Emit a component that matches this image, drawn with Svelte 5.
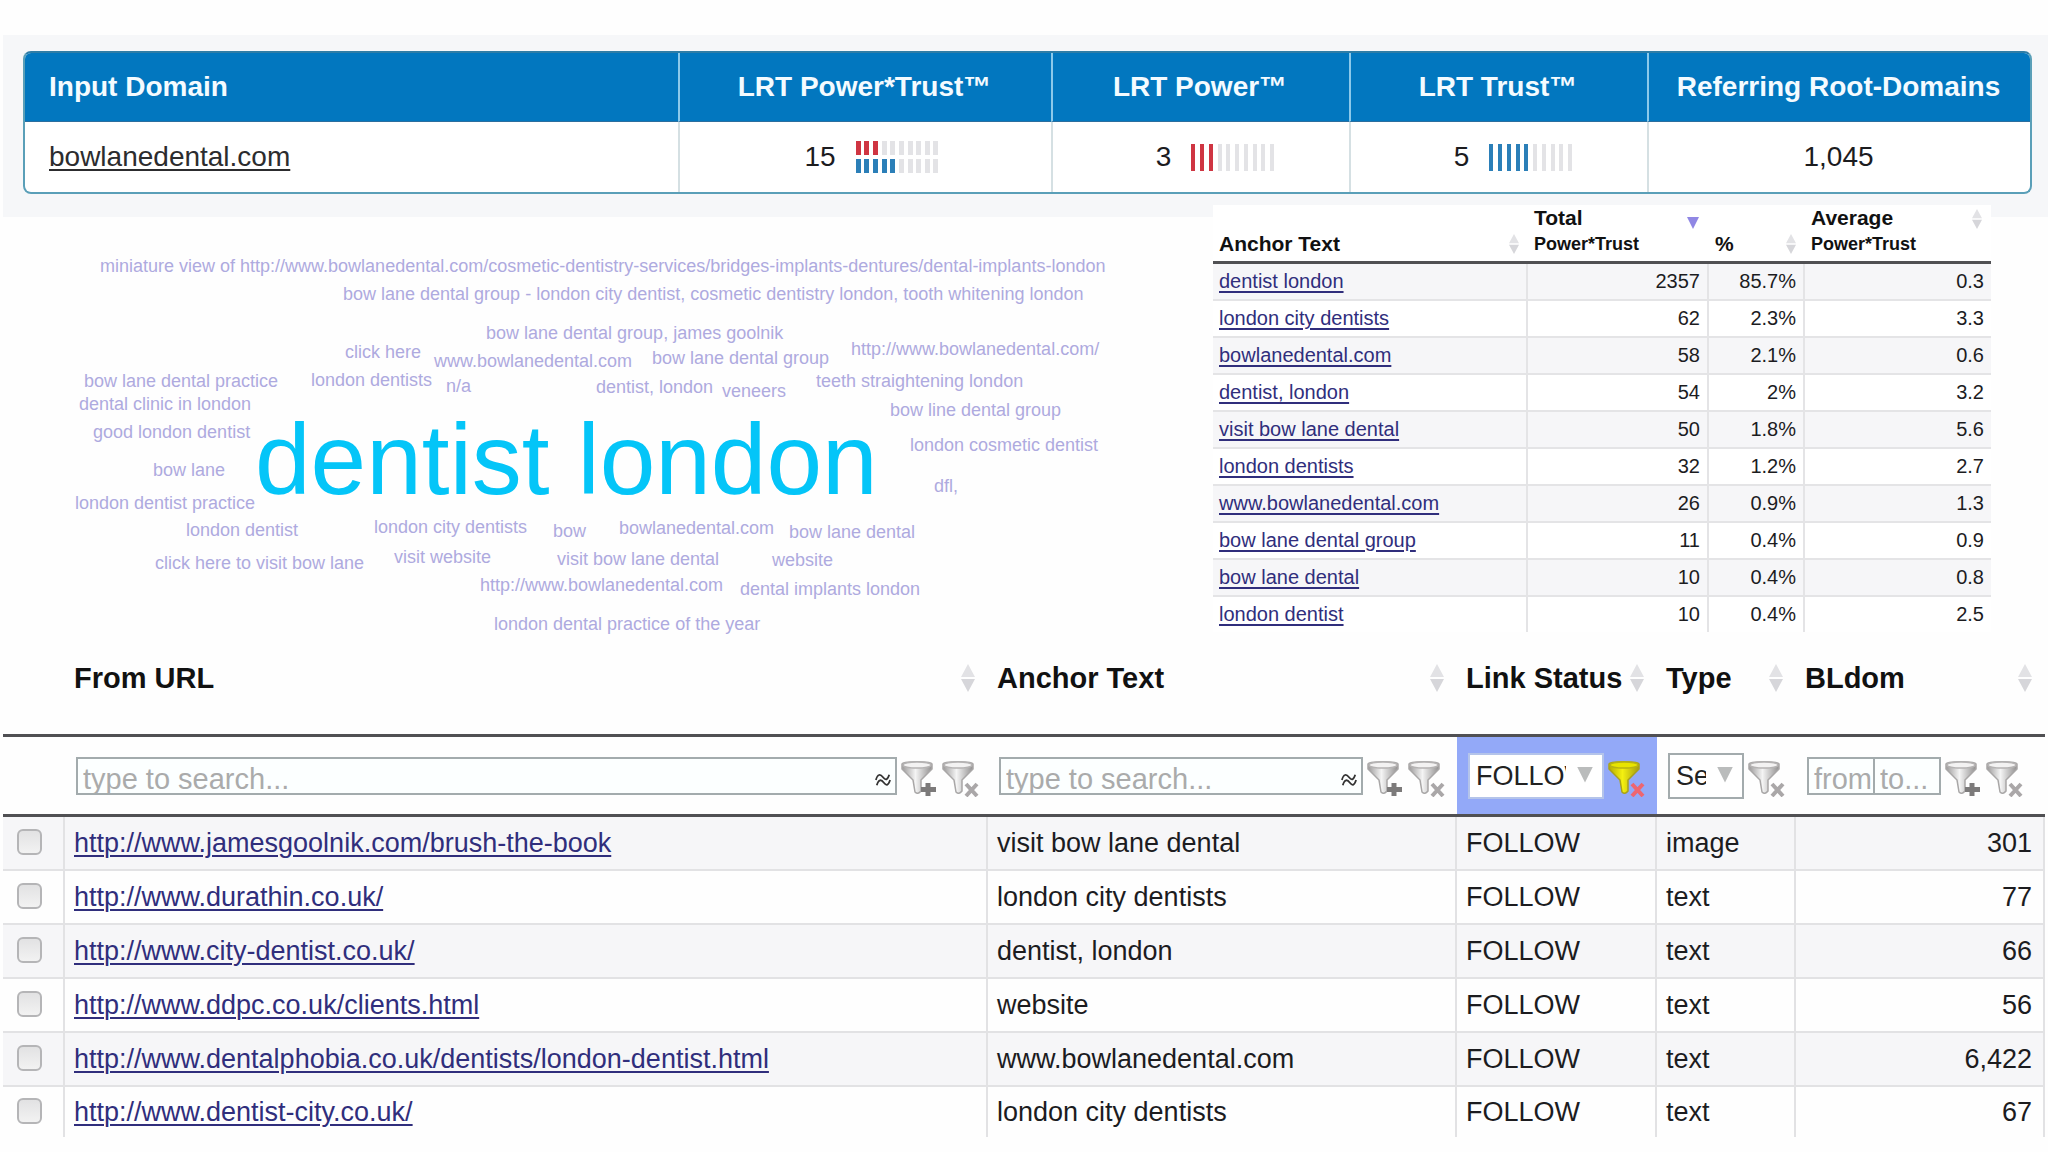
<script>
  const phrases = [
    ['miniature view of http://www.bowlanedental.com/cosmetic-dentistry-services/bridges-implants-dentures/dental-implants-london', 100, 66],
    ['bow lane dental group - london city dentist, cosmetic dentistry london, tooth whitening london', 343, 94],
    ['bow lane dental group, james goolnik', 486, 133],
    ['click here', 345, 152],
    ['www.bowlanedental.com', 434, 161],
    ['bow lane dental group', 652, 158],
    ['http://www.bowlanedental.com/', 851, 149],
    ['bow lane dental practice', 84, 181],
    ['london dentists', 311, 180],
    ['n/a', 446, 186],
    ['dentist, london', 596, 187],
    ['veneers', 722, 191],
    ['teeth straightening london', 816, 181],
    ['dental clinic in london', 79, 204],
    ['bow line dental group', 890, 210],
    ['good london dentist', 93, 232],
    ['london cosmetic dentist', 910, 245],
    ['bow lane', 153, 270],
    ['dfl,', 934, 286],
    ['london dentist practice', 75, 303],
    ['london dentist', 186, 330],
    ['london city dentists', 374, 327],
    ['bow', 553, 331],
    ['bowlanedental.com', 619, 328],
    ['bow lane dental', 789, 332],
    ['click here to visit bow lane', 155, 363],
    ['visit website', 394, 357],
    ['visit bow lane dental', 557, 359],
    ['website', 772, 360],
    ['http://www.bowlanedental.com', 480, 385],
    ['dental implants london', 740, 389],
    ['london dental practice of the year', 494, 424]
  ];

  const anchors = [
    ['dentist london', '2357', '85.7%', '0.3'],
    ['london city dentists', '62', '2.3%', '3.3'],
    ['bowlanedental.com', '58', '2.1%', '0.6'],
    ['dentist, london', '54', '2%', '3.2'],
    ['visit bow lane dental', '50', '1.8%', '5.6'],
    ['london dentists', '32', '1.2%', '2.7'],
    ['www.bowlanedental.com', '26', '0.9%', '1.3'],
    ['bow lane dental group', '11', '0.4%', '0.9'],
    ['bow lane dental', '10', '0.4%', '0.8'],
    ['london dentist', '10', '0.4%', '2.5']
  ];

  const links = [
    ['http://www.jamesgoolnik.com/brush-the-book', 'visit bow lane dental', 'image', '301'],
    ['http://www.durathin.co.uk/', 'london city dentists', 'text', '77'],
    ['http://www.city-dentist.co.uk/', 'dentist, london', 'text', '66'],
    ['http://www.ddpc.co.uk/clients.html', 'website', 'text', '56'],
    ['http://www.dentalphobia.co.uk/dentists/london-dentist.html', 'www.bowlanedental.com', 'text', '6,422'],
    ['http://www.dentist-city.co.uk/', 'london city dentists', 'text', '67']
  ];
</script>

{#snippet bars(filled, tone, short)}
  <span class="bars {tone}" class:short>
    {#each Array(10) as _, i}<i class:on={i < filled}></i>{/each}
  </span>
{/snippet}

{#snippet sorter(label)}
  <button class="sorter" aria-label="Sort by {label}">
    <svg viewBox="0 0 16 30" width="100%" height="100%" preserveAspectRatio="none">
      <path d="M8 0 16 14H0z" fill="#e2e2e5" />
      <path d="M8 30 16 16H0z" fill="#d6d6da" />
    </svg>
  </button>
{/snippet}

{#snippet funnel(kind, label)}
  <button class="funnel" aria-label={label}>
    <svg viewBox="0 0 37 37" width="37" height="37">
      <defs>
        <linearGradient id="cone-{kind}">
          {#if kind === 'active'}
            <stop offset="0" stop-color="#b5ac00" />
            <stop offset=".45" stop-color="#f4f010" />
            <stop offset="1" stop-color="#a59d10" />
          {:else}
            <stop offset="0" stop-color="#9b9999" />
            <stop offset=".45" stop-color="#f4f4f4" />
            <stop offset="1" stop-color="#918f8f" />
          {/if}
        </linearGradient>
      </defs>
      <path
        d="M1 4C1 1 31 1 31 4V9L20 20V31Q17 35 14 32L12 20 1 9Z"
        fill="url(#cone-{kind})"
        stroke={kind === 'active' ? '#a8a11c' : '#a9a7a7'}
        stroke-width="1.5"
      />
      <ellipse
        cx="16" cy="5" rx="14" ry="3"
        fill={kind === 'active' ? '#e8e400' : '#f3f2f2'}
        stroke={kind === 'active' ? '#b8b313' : '#b5b3b3'}
        stroke-width="1.5"
      />
      {#if kind === 'add'}
        <path d="M27 23V36M20 29.500H35" stroke="#7c7a7a" stroke-width="5" />
      {:else}
        <path
          d="M24 24 35 36M35 24 24 36"
          stroke={kind === 'active' ? '#ee6670' : '#aaa7a8'}
          stroke-width="4"
        />
      {/if}
    </svg>
  </button>
{/snippet}

{#snippet search(label)}
  <div class="filter">
    <div class="field">
      <input type="text" placeholder="type to search..." aria-label="Search {label}" />
      <button class="fuzzy" aria-label="Match mode for {label}">
        <svg viewBox="0 0 18 16" width="16" height="16" fill="none" stroke="#333" stroke-width="2">
          <path d="M1 8C3 1 6 1 9 5S14 8 16 2M2 14C4 7 7 7 10 11S15 14 17 8" />
        </svg>
      </button>
    </div>
    {@render funnel('add', `Add filter on ${label}`)}
    {@render funnel('clear', `Clear filter on ${label}`)}
  </div>
{/snippet}

<main>
  <section class="summary">
    <div class="frame">
      <table>
        <colgroup>
          <col class="s1" /><col class="s2" /><col class="s3" /><col class="s3" /><col class="s5" />
        </colgroup>
        <thead>
          <tr>
            <th class="left">Input Domain</th>
            <th>LRT Power*Trust™</th>
            <th>LRT Power™</th>
            <th>LRT Trust™</th>
            <th>Referring Root-Domains</th>
          </tr>
        </thead>
        <tbody>
          <tr>
            <td class="left"><a href="#domain">bowlanedental.com</a></td>
            <td>
              <div class="score double">
                15
                <div class="stack">{@render bars(3, 'red', true)}{@render bars(5, 'blue', true)}</div>
              </div>
            </td>
            <td><div class="score">3 {@render bars(3, 'red', false)}</div></td>
            <td><div class="score">5 {@render bars(5, 'blue', false)}</div></td>
            <td>1,045</td>
          </tr>
        </tbody>
      </table>
    </div>
  </section>

  <section class="middle">
    <div class="cloud">
      {#each phrases as [text, x, y]}
        <span class="phrase" style:left="{(x - 3) / 12.1}%" style:top="{y}px">{text}</span>
      {/each}
      <span class="phrase lead" style:left="{252 / 12.1}%" style:top="259px">dentist london</span>
    </div>

    <table class="anchors">
      <colgroup><col class="a1" /><col class="a2" /><col class="a3" /><col class="a4" /></colgroup>
      <thead>
        <tr>
          <th><div class="head">Anchor Text {@render sorter('anchor text')}</div></th>
          <th>
            <div class="head top">
              <span>Total<small>Power*Trust</small></span>
              <button class="sorted" aria-label="Sorted by total, descending"></button>
            </div>
          </th>
          <th><div class="head">% {@render sorter('percent')}</div></th>
          <th>
            <div class="head top">
              <span>Average<small>Power*Trust</small></span>
              {@render sorter('average')}
            </div>
          </th>
        </tr>
      </thead>
      <tbody>
        {#each anchors as [text, total, pct, avg]}
          <tr>
            <td><a href="#anchor">{text}</a></td>
            <td>{total}</td>
            <td>{pct}</td>
            <td>{avg}</td>
          </tr>
        {/each}
      </tbody>
    </table>
  </section>

  <table class="links">
    <colgroup>
      <col class="l1" /><col class="l2" /><col class="l3" /><col class="l4" /><col class="l5" /><col class="l6" />
    </colgroup>
    <thead>
      <tr class="titles">
        <td></td>
        <th><div class="head">From URL {@render sorter('URL')}</div></th>
        <th><div class="head">Anchor Text {@render sorter('anchor text')}</div></th>
        <th><div class="head">Link Status {@render sorter('link status')}</div></th>
        <th><div class="head">Type {@render sorter('type')}</div></th>
        <th><div class="head">BLdom {@render sorter('BLdom')}</div></th>
      </tr>
      <tr class="filters">
        <td></td>
        <td>{@render search('URL')}</td>
        <td>{@render search('anchor text')}</td>
        <td class="active">
          <div class="filter">
            <div class="pick wide">
              <select aria-label="Link status"><option>FOLLOW</option><option>NOFOLLOW</option></select>
            </div>
            {@render funnel('active', 'Clear filter on link status')}
          </div>
        </td>
        <td>
          <div class="filter">
            <div class="pick">
              <select aria-label="Type"><option>Select</option><option>text</option><option>image</option></select>
            </div>
            {@render funnel('clear', 'Clear filter on type')}
          </div>
        </td>
        <td>
          <div class="filter">
            <div class="range">
              <input type="text" placeholder="from..." aria-label="BLdom from" />
              <input type="text" placeholder="to..." aria-label="BLdom to" />
            </div>
            {@render funnel('add', 'Add filter on BLdom')}
            {@render funnel('clear', 'Clear filter on BLdom')}
          </div>
        </td>
      </tr>
    </thead>
    <tbody>
      {#each links as [url, anchor, type, count]}
        <tr>
          <td><input type="checkbox" aria-label="Choose {url}" /></td>
          <td><a href={url}>{url}</a></td>
          <td>{anchor}</td>
          <td>FOLLOW</td>
          <td>{type}</td>
          <td class="num">{count}</td>
        </tr>
      {/each}
    </tbody>
  </table>
</main>

<style>
  :global(body) {
    background: #fefefe;
  }
  main {
    padding: 35px 3px 14px;
    font-family: 'Liberation Sans', Arial, Helvetica, sans-serif;
    color: #1c1c1f;
  }
  * {
    box-sizing: border-box;
  }
  table {
    width: 100%;
    border-collapse: separate;
    border-spacing: 0;
    table-layout: fixed;
  }
  th,
  td {
    padding: 0;
    white-space: nowrap;
  }
  button {
    padding: 0;
    border: 0;
    background: none;
    flex: none;
  }
  svg {
    display: block;
  }

  .summary {
    margin-right: -3px;
    padding: 16px 16px 23px 20px;
    background: #f6f7f9;
  }
  .frame {
    border: 2px solid #5a9fb8;
    border-top-color: #2f7da6;
    border-radius: 8px;
    overflow: hidden;
    background: #fff;
  }
  .s1 { width: 653px; }
  .s2 { width: 373px; }
  .s3 { width: 298px; }
  .summary th {
    height: 69px;
    padding-right: 2px;
    background: #0277bf;
    color: #f4fbff;
    font-size: 28px;
    border-bottom: 1px solid #2b6e9e;
    border-left: 2px solid #8cc9ea;
  }
  .summary td {
    height: 70px;
    padding-right: 2px;
    font-size: 28px;
    text-align: center;
    border-left: 2px solid #d5e0e3;
  }
  .summary .left {
    text-align: left;
    padding-left: 24px;
    border-left: 0;
  }
  .summary td a {
    color: #2c2c2e;
  }
  a {
    text-decoration-thickness: 2px;
    text-underline-offset: 3px;
  }
  .score {
    display: flex;
    align-items: center;
    justify-content: center;
    gap: 20px;
    padding-left: 30px;
  }
  .score.double {
    padding-left: 14px;
  }
  .stack {
    display: grid;
    gap: 4px;
  }
  .bars {
    display: flex;
    justify-content: space-between;
    width: 83px;
    height: 27px;
  }
  .bars.short {
    height: 14px;
  }
  .bars i {
    width: 4px;
    background: #e3e3e6;
  }
  .bars.short i {
    width: 5px;
  }
  .red .on { background: #cf3542; }
  .blue .on { background: #2b7fb8; }

  .middle {
    display: grid;
    grid-template-columns: 1210fr 778fr 54fr;
    margin-top: -17px;
    height: 451px;
  }
  .cloud {
    position: relative;
  }
  .phrase {
    position: absolute;
    transform: translateY(-50%);
    white-space: nowrap;
    font-size: 18px;
    line-height: 20px;
    color: #aeaadf;
  }
  .lead {
    font-size: 100px;
    line-height: 100px;
    color: #04c5f8;
  }

  .head {
    display: flex;
    align-items: center;
    justify-content: space-between;
    text-align: left;
  }
  .anchors {
    align-self: start;
    margin-top: 5px;
    background: #fff;
  }
  .a1 { width: 315px; }
  .a2 { width: 181px; }
  .a3 { width: 96px; }
  .anchors th {
    height: 57px;
    padding: 0 9px 4px 6px;
    vertical-align: bottom;
    border-bottom: 3px solid #505053;
    color: #111;
    font-size: 21px;
    line-height: 26px;
  }
  .anchors small {
    display: block;
    font-size: 18px;
    line-height: 26px;
  }
  .head.top {
    align-items: flex-start;
  }
  .sorter {
    width: 10px;
    height: 20px;
  }
  .anchors .top .sorter {
    margin-top: 4px;
  }
  .sorted {
    margin: 12px 1px 0 0;
    width: 12px;
    height: 12px;
    background: #9087e4;
    clip-path: polygon(0 0, 100% 0, 50% 100%);
  }
  .anchors td {
    height: 37px;
    padding: 0 7px 0 6px;
    font-size: 20px;
    text-align: right;
    border-bottom: 2px solid #e4e4e6;
    border-right: 2px solid #e4e4e6;
  }
  .anchors td:first-child {
    text-align: left;
  }
  .anchors td:last-child {
    border-right: 0;
  }
  tbody tr:last-child td {
    border-bottom: 0;
  }
  .anchors tbody tr:last-child td {
    height: 35px;
  }
  .anchors tbody tr:nth-child(odd),
  .links tbody tr:nth-child(odd) {
    background: #f6f6f8;
  }
  .anchors a,
  .links a {
    color: #302e7c;
  }

  .l1 { width: 62px; }
  .l3 { width: 469px; }
  .l4 { width: 200px; }
  .l5 { width: 139px; }
  .l6 { width: 249px; }
  .titles th,
  .titles td {
    height: 86px;
    border-bottom: 3px solid #505053;
    font-size: 29px;
    line-height: 32px;
    color: #111;
    vertical-align: top;
  }
  .titles th {
    padding: 11px 13px 0 9px;
  }
  .titles .sorter {
    width: 14px;
    height: 28px;
  }
  .filters td {
    height: 80px;
    border-bottom: 3px solid #505053;
    padding: 0 9px 0 11px;
  }
  .filters td:nth-child(3) {
    padding-right: 12px;
  }
  .filters .active {
    background: #93a9f8;
  }
  .filter {
    display: flex;
    align-items: center;
    gap: 4px;
  }
  .funnel {
    margin-top: 6px;
  }
  .field {
    position: relative;
    flex: 1;
    min-width: 0;
  }
  input[type='text'] {
    display: block;
    width: 100%;
    height: 38px;
    padding: 8px 0 0 5px;
    border: 2px solid #a3abad;
    border-radius: 0;
    outline: 0;
    background: #fcffff;
    font-family: inherit;
    font-size: 29px;
    line-height: 28px;
  }
  input::placeholder {
    color: #aaabab;
    opacity: 1;
  }
  .fuzzy {
    position: absolute;
    right: 6px;
    top: 15px;
  }
  .range {
    display: flex;
    flex: none;
    width: 134px;
  }
  .range input:last-child {
    margin-left: -2px;
  }
  .pick {
    position: relative;
    flex: none;
    width: 76px;
  }
  .pick.wide {
    width: 136px;
  }
  .pick::after {
    content: '';
    position: absolute;
    right: 11px;
    top: 14px;
    width: 16px;
    height: 16px;
    background: #babcbc;
    clip-path: polygon(0 0, 100% 0, 50% 100%);
    pointer-events: none;
  }
  select {
    display: block;
    appearance: none;
    width: 100%;
    height: 46px;
    padding: 0 36px 0 6px;
    border: 2px solid #a3abad;
    border-radius: 0;
    background: #fff;
    color: #222;
    font-family: inherit;
    font-size: 27px;
  }
  .wide select {
    border-color: #b4c4ea;
  }
  .links tbody td {
    height: 54px;
    padding: 0 9px;
    font-size: 27px;
    border-bottom: 2px solid #e2e2e4;
    border-right: 2px solid #e2e2e4;
  }
  .links tbody tr:last-child td {
    height: 50px;
    border-bottom: 0;
  }
  .links .num {
    padding-right: 11px;
    text-align: right;
  }
  input[type='checkbox'] {
    display: block;
    appearance: none;
    width: 25px;
    height: 26px;
    margin: 0 0 2px 5px;
    border: 2px solid #b5b5b7;
    border-radius: 6px;
    background: linear-gradient(#e2e2e3, #f2f2f2);
  }
</style>
